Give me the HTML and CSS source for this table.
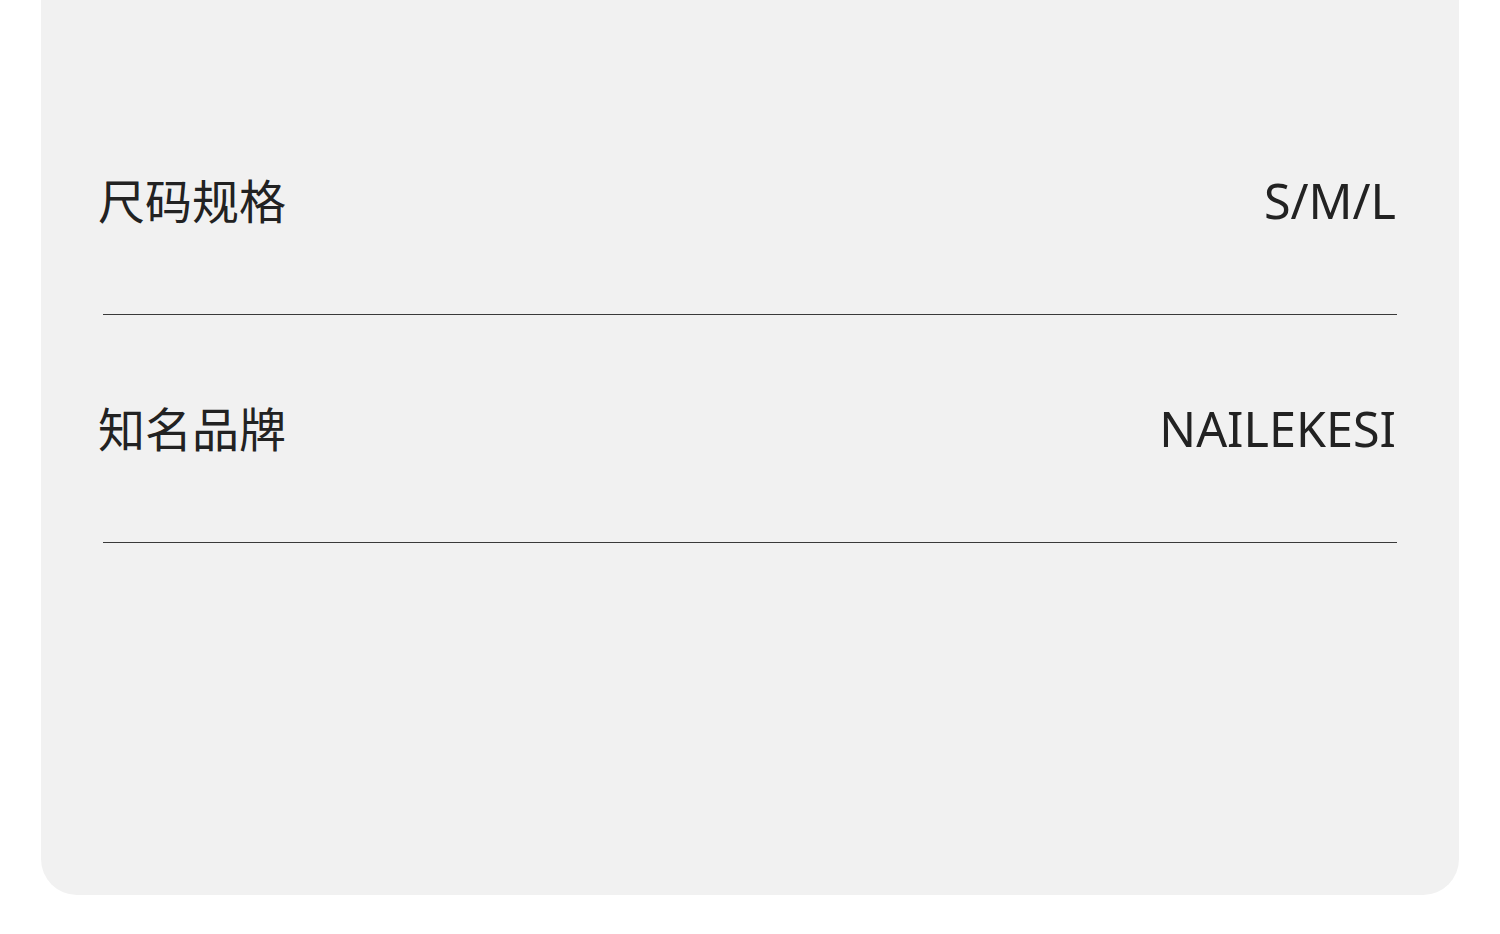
FILE: index.html
```html
<!DOCTYPE html>
<html lang="zh">
<head>
<meta charset="utf-8">
<link rel="stylesheet" href="styles.css">
</head>
<body>
<div class="page">
  <div class="card">
    <div class="row">
      <span class="label">尺码规格</span>
      <span class="value">S/M/L</span>
    </div>
    <div class="row">
      <span class="label">知名品牌</span>
      <span class="value">NAILEKESI</span>
    </div>
  </div>
</div>
</body>
</html>
```
FILE: styles.css
```css
html, body {
  margin: 0;
  padding: 0;
  background: #ffffff;
}
.page {
  width: 1500px;
  height: 934px;
  overflow: hidden;
  padding: 0 41px;
  box-sizing: border-box;
}
.card {
  background: #f1f1f1;
  border-radius: 0 0 36px 36px;
  height: 895px;
  padding: 87px 62px 0 62px;
  box-sizing: border-box;
  font-family: "Noto Sans", "Noto Sans CJK SC", sans-serif;
  color: #222;
}
.row {
  height: 228px;
  box-sizing: border-box;
  display: flex;
  justify-content: space-between;
  align-items: center;
  border-bottom: 1.5px solid #3a3a3a;
}
.label {
  font-family: "Noto Sans CJK SC", sans-serif;
  font-size: 47px;
  margin-left: -5px;
  margin-top: -4px;
}
.value {
  font-family: "Noto Sans", sans-serif;
  font-size: 48.5px;
  margin-top: -2px;
  margin-right: 1px;
}
```
